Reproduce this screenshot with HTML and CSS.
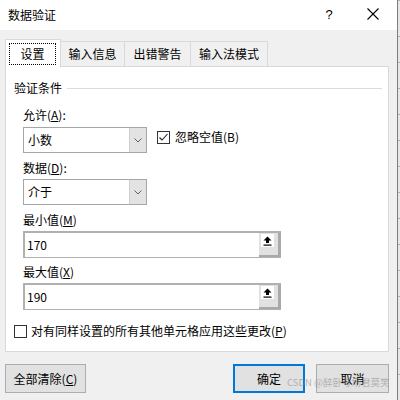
FILE: index.html
```html
<!DOCTYPE html>
<html lang="zh-CN">
<head>
<meta charset="utf-8">
<title>数据验证</title>
<link rel="stylesheet" href="styles.css">
</head>
<body>
<div class="window">
  <div class="dialog">
    <div class="titlebar">
      <span class="title">数据验证</span>
      <span class="help">?</span>
      <span class="close"><svg width="12" height="12" viewBox="0 0 12 12"><path d="M0.5 0.5L11.5 11.5M11.5 0.5L0.5 11.5" stroke="#000" stroke-width="1.1" fill="none"/></svg></span>
    </div>
    <div class="body">
      <div class="tabs">
        <div class="tab active"><span class="focus">设置</span></div>
        <div class="tab t2">输入信息</div>
        <div class="tab t3">出错警告</div>
        <div class="tab t4">输入法模式</div>
      </div>
      <div class="panel">
        <div class="group-head"><span class="group-title">验证条件</span><span class="rule"></span></div>
        <div class="label first">允许(<u>A</u>):</div>
        <div class="row first-ctrl">
          <div class="select"><span class="val">小数</span><span class="drop"><svg width="8" height="5" viewBox="0 0 8 5"><path d="M0.5 0.5L4 4L7.5 0.5" stroke="#606060" stroke-width="1" fill="none"/></svg></span></div>
          <div class="check inline"><span class="box"><svg width="11" height="11" viewBox="0 0 11 11"><path d="M1.5 5.5L4 8L9.5 2" stroke="#222" stroke-width="1.1" fill="none"/></svg></span><span>忽略空值(B)</span></div>
        </div>
        <div class="label">数据(<u>D</u>):</div>
        <div class="row ctrl">
          <div class="select"><span class="val">介于</span><span class="drop"><svg width="8" height="5" viewBox="0 0 8 5"><path d="M0.5 0.5L4 4L7.5 0.5" stroke="#606060" stroke-width="1" fill="none"/></svg></span></div>
        </div>
        <div class="label">最小值(<u>M</u>)</div>
        <div class="row ctrl">
          <div class="refedit"><span class="val">170</span><span class="refbtn"><span class="refface"><svg width="9" height="10" viewBox="0 0 9 10"><path d="M4.5 0.5L8.5 4.5H6V7H3V4.5H0.5Z" fill="#000"/><rect x="0.5" y="8.5" width="8" height="1.2" fill="#000"/></svg></span></span></div>
        </div>
        <div class="label l4">最大值(<u>X</u>)</div>
        <div class="row ctrl">
          <div class="refedit"><span class="val">190</span><span class="refbtn"><span class="refface"><svg width="9" height="10" viewBox="0 0 9 10"><path d="M4.5 0.5L8.5 4.5H6V7H3V4.5H0.5Z" fill="#000"/><rect x="0.5" y="8.5" width="8" height="1.2" fill="#000"/></svg></span></span></div>
        </div>
        <div class="check bottom"><span class="box"></span><span>对有同样设置的所有其他单元格应用这些更改(<u>P</u>)</span></div>
      </div>
      <div class="buttons">
        <div class="btn clear">全部清除(<u>C</u>)</div>
        <div class="btn ok">确定</div>
        <div class="btn cancel">取消</div>
      </div>
      <div class="watermark">CSDN @醉卧考场君莫笑</div>
    </div>
  </div>
  <div class="edge"></div>
</div>
</body>
</html>
```
FILE: styles.css
```css
html, body {
  margin: 0;
  padding: 0;
}
body {
  width: 400px;
  height: 400px;
  overflow: hidden;
  font-family: "Noto Sans CJK SC", "Noto Sans", sans-serif;
  font-size: 12px;
  line-height: 16px;
  color: #000;
  background: #f0f0f0;
}
u {
  text-decoration: underline;
  text-underline-offset: 1px;
}
.window {
  display: flex;
  width: 400px;
  height: 400px;
}
.dialog {
  width: 397px;
  display: flex;
  flex-direction: column;
}
.edge {
  width: 2px;
  border-left: 1px solid #7d7d7d;
  background-color: #e6e6e6;
  background-image: repeating-linear-gradient(to bottom, transparent 0, transparent 25px, #b4b4b4 25px, #b4b4b4 26px);
  background-position: 0 11px;
}
.titlebar {
  height: 30px;
  background: #fff;
  display: flex;
  align-items: center;
  padding-left: 8px;
}
.title {
  flex: 1;
  line-height: 16px;
  margin-top: -1px;
}
.help {
  width: 30px;
  text-align: center;
  font-family: "Liberation Sans", sans-serif;
  font-size: 13px;
  margin-top: -1px;
}
.close {
  width: 46px;
  margin-left: 6px;
  margin-right: 1px;
  display: flex;
  justify-content: center;
  margin-top: -2px;
}
.body {
  flex: 1;
  position: relative;
  background: #f0f0f0;
  padding: 9px 0 0 5px;
}
.tabs {
  display: flex;
  height: 27px;
  align-items: flex-start;
}
.tab {
  box-sizing: border-box;
  height: 25px;
  margin-top: 2px;
  border: 1px solid #d9d9d9;
  border-bottom: none;
  background: #f0f0f0;
  display: flex;
  align-items: center;
  justify-content: center;
  margin-left: -1px;
}
.tab.active {
  position: relative;
  z-index: 1;
  height: 28px;
  margin-top: 0;
  margin-left: 0;
  width: 56px;
  background: #fff;
  align-items: flex-start;
  justify-content: flex-start;
}
.focus {
  box-sizing: border-box;
  margin: 3px 0 0 3px;
  width: 47px;
  height: 22px;
  border: 1px dotted #000;
  display: flex;
  align-items: center;
  justify-content: center;
}
.t2 { width: 65px; }
.t3 { width: 67px; }
.t4 { width: 78px; }
.panel {
  box-sizing: border-box;
  width: 384px;
  height: 286px;
  background: #fff;
  border: 1px solid #d9d9d9;
  padding: 0 6px 0 17px;
  display: flex;
  flex-direction: column;
  align-items: flex-start;
}
.group-head {
  align-self: stretch;
  margin-left: -9px;
  margin-top: 13px;
  display: flex;
  align-items: center;
}
.group-title {
  margin-right: 5px;
}
.rule {
  flex: 1;
  height: 1px;
  background: #dcdcdc;
}
.label {
  margin-top: 7px;
  height: 16px;
}
.label.first {
  margin-top: 11px;
}
.label.l4 {
  margin-top: 6px;
}
.row {
  display: flex;
  align-items: center;
  margin-top: 3px;
}
.row.first-ctrl {
  margin-top: 4px;
}
.select {
  box-sizing: border-box;
  width: 124px;
  height: 26px;
  border: 1px solid #a6a6a6;
  display: flex;
  align-items: stretch;
  background: #fff;
}
.val {
  flex: 1;
  padding-left: 4px;
  display: flex;
  align-items: center;
}
.drop {
  width: 16px;
  background: #e3e3e3;
  border-left: 1px solid #cfcfcf;
  display: flex;
  align-items: center;
  justify-content: center;
}
.check {
  display: flex;
  align-items: center;
}
.check.inline {
  margin-left: 10px;
  margin-top: -6px;
}
.box {
  box-sizing: border-box;
  width: 13px;
  height: 13px;
  border: 1px solid #333;
  background: #fff;
  margin-right: 5px;
  display: flex;
  align-items: center;
  justify-content: center;
}
.check.bottom {
  margin-left: -9px;
  margin-top: 13px;
}
.check.bottom .box {
  margin-right: 4px;
}
.refedit {
  box-sizing: border-box;
  width: 258px;
  height: 27px;
  border: 2px solid #b0b0b0;
  border-right: none;
  border-bottom-width: 1px;
  display: flex;
  background: #fff;
}
.refedit .val {
  padding-left: 2px;
}
.refbtn {
  box-sizing: border-box;
  width: 22px;
  background: #e1e1e1;
  border-right: 3px solid #a9a9a9;
  border-bottom: 2px solid #a9a9a9;
  padding: 1px 0 0 2px;
}
.refface {
  width: 13px;
  height: 13px;
  background: #fff;
  display: flex;
  align-items: center;
  justify-content: center;
}
.buttons {
  display: flex;
  width: 384px;
  margin-top: 12px;
}
.btn {
  box-sizing: border-box;
  height: 29px;
  background: #e1e1e1;
  border: 1px solid #adadad;
  display: flex;
  align-items: center;
  justify-content: center;
}
.clear {
  width: 81px;
}
.ok {
  width: 72px;
  margin-left: auto;
  border: 2px solid #0078d7;
}
.cancel {
  width: 73px;
  margin-left: 11px;
}
.watermark {
  position: absolute;
  left: 287px;
  top: 346px;
  font-size: 9.5px;
  line-height: 13px;
  color: rgba(130, 130, 130, 0.55);
  white-space: nowrap;
}
```
